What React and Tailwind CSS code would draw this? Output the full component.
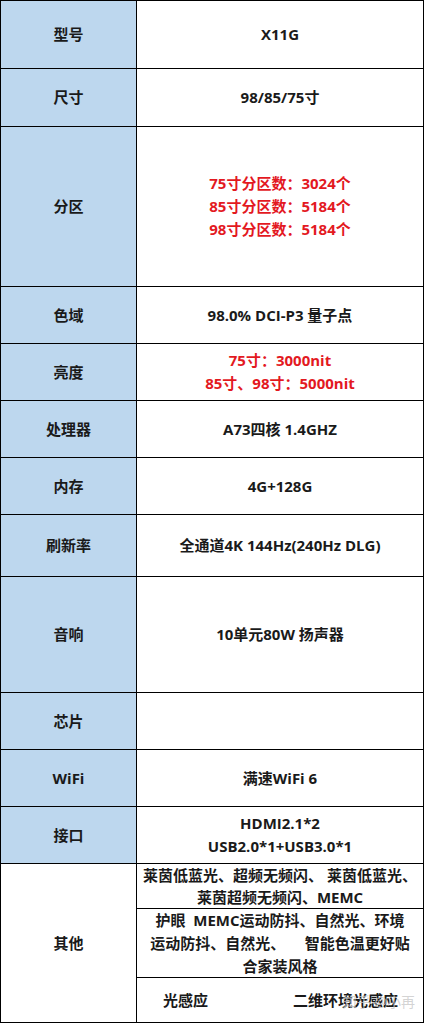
const rows = [
  { label: "型号", h: "h-[67px]", value: ["X11G"] },
  { label: "尺寸", h: "h-[57px]", value: ["98/85/75寸"] },
  { label: "分区", h: "h-[159px]", value: ["75寸分区数：3024个", "85寸分区数：5184个", "98寸分区数：5184个"], red: true },
  { label: "色域", h: "h-[56px]", value: ["98.0% DCI-P3 量子点"] },
  { label: "亮度", h: "h-[56px]", value: ["75寸：3000nit", "85寸、98寸：5000nit"], red: true },
  { label: "处理器", h: "h-[56px]", value: ["A73四核 1.4GHZ"] },
  { label: "内存", h: "h-[56px]", value: ["4G+128G"] },
  { label: "刷新率", h: "h-[61px]", value: ["全通道4K 144Hz(240Hz DLG)"] },
  { label: "音响", h: "h-[115px]", value: ["10单元80W 扬声器"] },
  { label: "芯片", h: "h-[56px]", value: [] },
  { label: "WiFi", h: "h-[56px]", value: ["满速WiFi 6"] },
  { label: "接口", h: "h-[56px]", value: ["HDMI2.1*2", "USB2.0*1+USB3.0*1"] },
];

const font = { fontFamily: '"Open Sans", "Noto Sans CJK SC", sans-serif' };

export default function App() {
  return (
    <div className="w-[425px] bg-white" style={font}>
      <div className="w-[424px] bg-black p-px grid grid-cols-[135px_286px] gap-px text-[15px] font-bold text-[#1a1a1a] leading-[23px]">
        {rows.map((r) => (
          <div key={r.label} className="contents">
            <div className={`${r.h} bg-[#bdd7ee] flex items-center justify-center`}>{r.label}</div>
            <div className={`${r.h} bg-white flex flex-col items-center justify-center ${r.red ? "text-[#e3191f]" : ""}`}>
              {r.value.map((v) => (
                <div key={v} className="whitespace-nowrap">{v}</div>
              ))}
            </div>
          </div>
        ))}

        {/* 其他 */}
        <div className="h-[158px] bg-white flex items-center justify-center">其他</div>
        <div className="h-[158px] bg-black flex flex-col gap-px">
          <div className="h-[44px] bg-white flex flex-col items-center justify-center leading-[22px]">
            <div className="whitespace-pre">莱茵低蓝光、超频无频闪、 莱茵低蓝光、</div>
            <div className="whitespace-pre">莱茵超频无频闪、MEMC</div>
          </div>
          <div className="h-[68px] bg-white flex flex-col items-center justify-center leading-[23px]">
            <div className="whitespace-pre">护眼  MEMC运动防抖、自然光、环境</div>
            <div className="whitespace-pre">运动防抖、自然光、     智能色温更好贴</div>
            <div className="whitespace-pre">合家装风格</div>
          </div>
          <div className="relative h-[44px] bg-white flex items-center justify-between pl-[26px] pr-[25px]">
            <span>光感应</span>
            <span>二维环境光感应</span>
            <span className="absolute right-[8px] top-[12px] text-[14px] font-normal text-[#c9c9c9]/80">知乎 @小再</span>
          </div>
        </div>
      </div>
    </div>
  );
}
